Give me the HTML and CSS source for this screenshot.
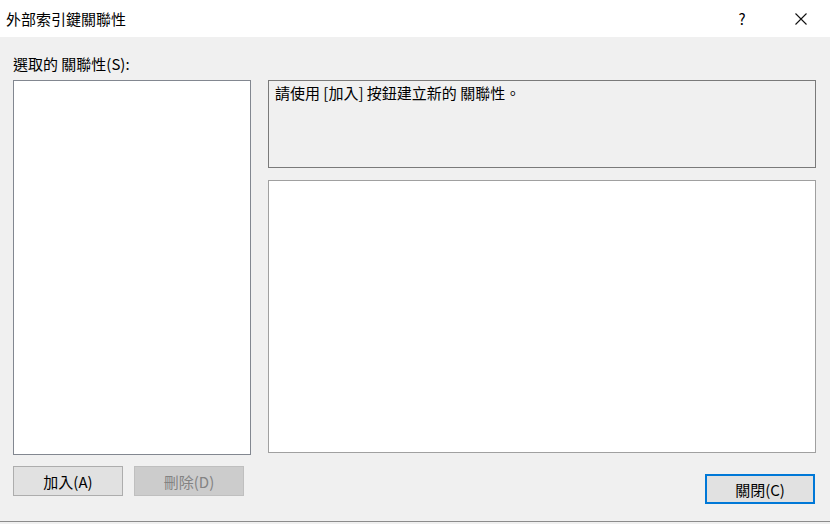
FILE: index.html
```html
<!DOCTYPE html>
<html lang="zh-Hant">
  <head>
    <meta charset="UTF-8" />
    <title>外部索引鍵關聯性</title>
    <link rel="stylesheet" href="styles.css">
  </head>
  <body>
    <div class="titlebar">
      <div class="caption">外部索引鍵關聯性</div>
      <div class="help">?</div>
      <div class="close">
        <svg width="12" height="12" viewBox="0 0 12 12">
          <path d="M0.5 0.5 L11.5 11.5 M11.5 0.5 L0.5 11.5" stroke="#111" stroke-width="1.1" fill="none" />
        </svg>
      </div>
    </div>
    <main class="dialog">
      <div class="left">
        <div class="label">選取的 關聯性(S):</div>
        <div class="listbox"></div>
        <div class="btn-row">
          <button class="btn">加入(A)</button>
          <button class="btn disabled">刪除(D)</button>
        </div>
      </div>
      <div class="right">
        <div class="hint">請使用 [加入] 按鈕建立新的 關聯性。</div>
        <div class="grid-box"></div>
        <div class="close-row">
          <button class="btn default">關閉(C)</button>
        </div>
      </div>
    </main>
  </body>
</html>
```
FILE: styles.css
```css
* {
  margin: 0;
  padding: 0;
  box-sizing: border-box;
}

body {
  width: 830px;
  height: 524px;
  background: #f0f0f0;
  font-family: "Noto Sans CJK TC", "Noto Sans", sans-serif;
  font-size: 15px;
  color: #000;
  overflow: hidden;
}

.titlebar {
  height: 37px;
  background: #fff;
  display: flex;
  align-items: center;
}

.caption {
  flex: 1;
  padding-left: 6px;
  font-size: 15px;
}

.help {
  width: 20px;
  text-align: center;
  font-size: 15px;
  margin-right: 43px;
}

.close {
  width: 12px;
  height: 12px;
  margin-right: 23px;
  display: flex;
}

.dialog {
  display: flex;
  gap: 17px;
  padding: 0 14px 0 13px;
  height: 485px;
  border-bottom: 1px solid #8c8c8c;
}

.left {
  width: 238px;
  display: flex;
  flex-direction: column;
}

.label {
  height: 43px;
  padding-top: 17px;
  line-height: 20px;
}

.listbox {
  height: 375px;
  background: #fff;
  border: 1px solid #828790;
}

.btn-row {
  display: flex;
  gap: 11px;
  margin-top: 11px;
}

.btn {
  width: 110px;
  height: 30px;
  background: #e1e1e1;
  border: 1px solid #adadad;
  font-family: inherit;
  font-size: 15px;
  color: #000;
}

.btn.disabled {
  background: #cccccc;
  border-color: #bfbfbf;
  color: #838383;
}

.btn.default {
  border: 2px solid #0078d7;
}

.right {
  flex: 1;
  display: flex;
  flex-direction: column;
  padding-top: 43px;
}

.hint {
  height: 88px;
  border: 1px solid #7a7a7a;
  padding: 2px 6px;
  line-height: 20px;
}

.grid-box {
  height: 273px;
  margin-top: 12px;
  background: #fff;
  border: 1px solid #a0a0a0;
}

.close-row {
  display: flex;
  justify-content: flex-end;
  margin-top: 21px;
  padding-right: 1px;
}
```
